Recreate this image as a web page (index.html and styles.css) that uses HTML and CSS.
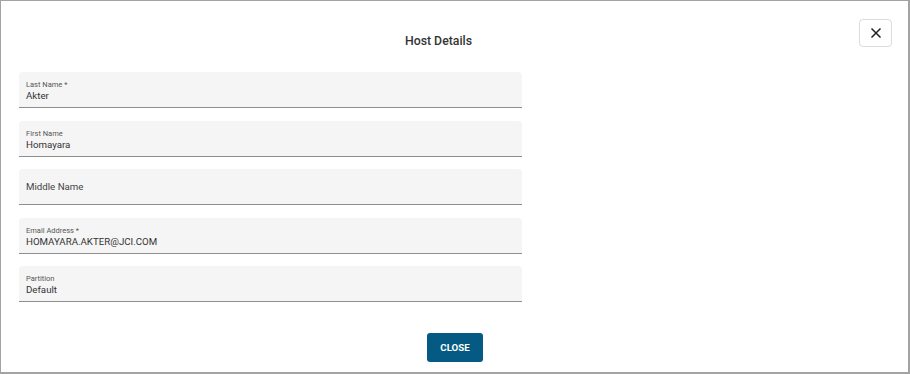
FILE: index.html
```html
<!DOCTYPE html>
<html lang="en">
<head>
    <meta charset="UTF-8">
    <meta name="viewport" content="width=device-width, initial-scale=1.0">
    <title>Host Details</title>
    <link rel="stylesheet" href="styles.css">
</head>
<body>
    <div class="host-dialog">
        <div class="host-header">
            <div class="host-title">Host Details</div>
            <button class="host-x" title="Close">
                <svg width="12" height="12" viewBox="0 0 12 12">
                    <path d="M1.5 1.5 L10.5 10.5 M10.5 1.5 L1.5 10.5" stroke="#222" stroke-width="1.5" fill="none" />
                </svg>
            </button>
        </div>

        <div class="host-form">
            <div class="host-field">
                <div class="host-label">Last Name *</div>
                <div class="host-value">Akter</div>
            </div>
            <div class="host-field">
                <div class="host-label">First Name</div>
                <div class="host-value">Homayara</div>
            </div>
            <div class="host-field host-field-empty">
                <div class="host-placeholder">Middle Name</div>
            </div>
            <div class="host-field">
                <div class="host-label">Email Address *</div>
                <div class="host-value">HOMAYARA.AKTER@JCI.COM</div>
            </div>
            <div class="host-field">
                <div class="host-label">Partition</div>
                <div class="host-value">Default</div>
            </div>
        </div>

        <div class="host-actions">
            <button class="host-close">CLOSE</button>
        </div>
    </div>
</body>
</html>
```

FILE: styles.css
```css
* {
    box-sizing: border-box;
}

body {
    margin: 0;
    font-family: Roboto, "Liberation Sans", sans-serif;
    color: #333;
    background: #fff;
}

.host-dialog {
    height: 374px;
    border: 1px solid #a3a3a3;
    border-right-width: 2px;
    border-bottom-width: 2px;
    display: flex;
    flex-direction: column;
}

.host-header {
    display: flex;
    align-items: flex-start;
    padding: 18px 16px 0 17px;
}

.host-title {
    flex: 1;
    text-align: center;
    margin-top: 15px;
    font-size: 12.3px;
    line-height: 15px;
    font-weight: 500;
    color: #333;
}

.host-x {
    width: 33px;
    height: 28px;
    padding: 0;
    border: 1px solid #dcdcdc;
    border-radius: 4px;
    background: #fff;
    display: flex;
    align-items: center;
    justify-content: center;
    cursor: pointer;
}

.host-form {
    display: flex;
    flex-direction: column;
    gap: 12.5px;
    width: 503px;
    margin: 23px 0 0 18px;
}

.host-field {
    height: 36px;
    background: #f5f5f5;
    border-radius: 4px 4px 0 0;
    border-bottom: 1.5px solid #8e8e8e;
    padding: 8px 7px 0;
}

.host-field-empty {
    display: flex;
    align-items: center;
    padding-top: 0;
}

.host-label {
    font-size: 7.5px;
    line-height: 9px;
    color: #555;
}

.host-value {
    font-size: 9.7px;
    line-height: 13px;
    color: #333;
}

.host-placeholder {
    font-size: 9.7px;
    line-height: 13px;
    color: #444;
}

.host-actions {
    display: flex;
    justify-content: center;
    margin-top: 31px;
    padding-left: 1px;
}

.host-close {
    width: 56px;
    height: 29px;
    border: none;
    border-radius: 3px;
    background: #055a83;
    color: #fff;
    font-family: Roboto, "Liberation Sans", sans-serif;
    font-size: 9.7px;
    font-weight: 700;
    cursor: pointer;
}
```
